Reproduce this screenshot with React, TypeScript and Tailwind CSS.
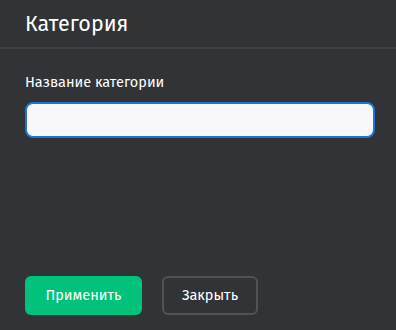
export default function App() {
  return (
    <div className="w-[396px] h-[330px] bg-[#323337] flex flex-col" style={{ fontFamily: '"Fira Sans", "Open Sans", "Noto Sans", sans-serif' }}>
      {/* Header */}
      <div className="h-[49px] border-b-2 border-[#3e3f43] px-[25px] flex items-center">
        <h2 className="text-[21.5px] text-white leading-none mt-[3px]">Категория</h2>
      </div>

      {/* Body */}
      <div className="flex-1 px-[25px] pt-[26px] flex flex-col">
        <label className="text-[14.5px] text-white leading-none mb-[12px]">Название категории</label>
        <input
          type="text"
          className="w-[350px] h-[36px] bg-[#f8f8fc] border-2 border-[#1f74dc] rounded-[8px] outline-none px-3"
        />
      </div>

      {/* Footer */}
      <div className="px-[25px] pb-[15px] flex items-center gap-[20px]">
        <button className="h-[39px] w-[117px] rounded-[6px] bg-[#00c27a] text-white text-[14.5px]">Применить</button>
        <button className="h-[39px] w-[96px] rounded-[6px] border-2 border-[#505256] text-white text-[14.5px]">Закрыть</button>
      </div>
    </div>
  )
}
